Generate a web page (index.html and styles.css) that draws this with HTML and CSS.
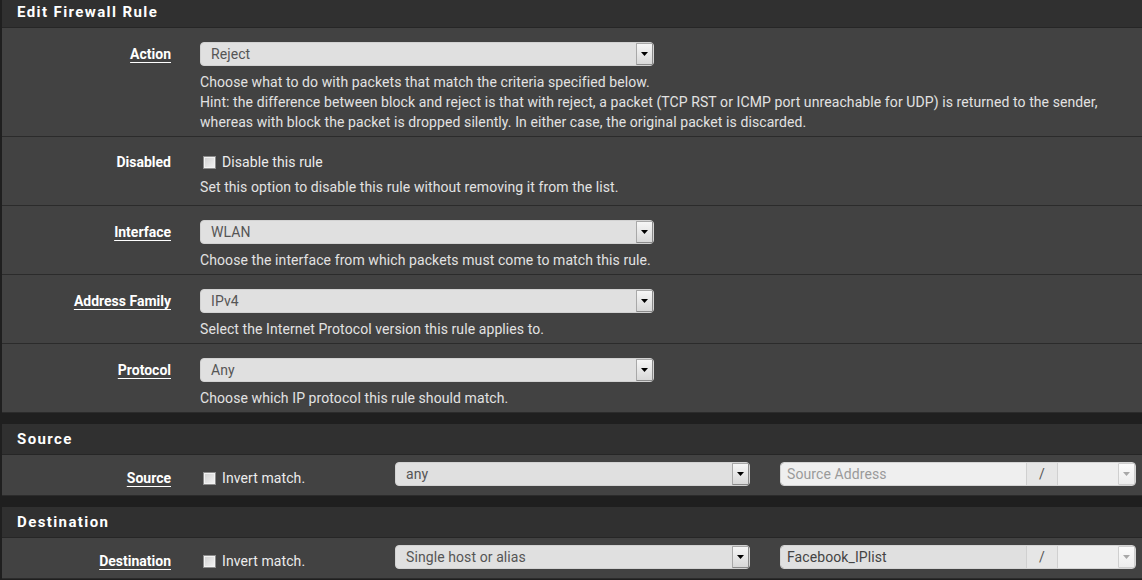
FILE: index.html
```html
<!DOCTYPE html>
<html>
<head>
<meta charset="utf-8">
<title>Edit Firewall Rule</title>
<link rel="stylesheet" href="styles.css">
</head>
<body>
<div class="page">
  <section class="panel">
    <h2 class="panel-heading">Edit Firewall Rule</h2>

    <div class="row">
      <div class="label"><span class="lbl u">Action</span></div>
      <div class="field">
        <div class="select w-main"><span class="val">Reject</span><span class="arrow"><svg width="7" height="4" viewBox="0 0 7 4"><path d="M0 0H7L3.5 4Z" fill="#000"/></svg></span></div>
        <p class="help">Choose what to do with packets that match the criteria specified below.<br>Hint: the difference between block and reject is that with reject, a packet (TCP RST or ICMP port unreachable for UDP) is returned to the sender, whereas with block the packet is dropped silently. In either case, the original packet is discarded.</p>
      </div>
    </div>

    <div class="row check-row">
      <div class="label"><span class="lbl">Disabled</span></div>
      <div class="field">
        <label class="check"><span class="box"></span><span>Disable this rule</span></label>
        <p class="help">Set this option to disable this rule without removing it from the list.</p>
      </div>
    </div>

    <div class="row">
      <div class="label"><span class="lbl u">Interface</span></div>
      <div class="field">
        <div class="select w-main"><span class="val">WLAN</span><span class="arrow"><svg width="7" height="4" viewBox="0 0 7 4"><path d="M0 0H7L3.5 4Z" fill="#000"/></svg></span></div>
        <p class="help">Choose the interface from which packets must come to match this rule.</p>
      </div>
    </div>

    <div class="row">
      <div class="label"><span class="lbl u">Address Family</span></div>
      <div class="field">
        <div class="select w-main"><span class="val">IPv4</span><span class="arrow"><svg width="7" height="4" viewBox="0 0 7 4"><path d="M0 0H7L3.5 4Z" fill="#000"/></svg></span></div>
        <p class="help">Select the Internet Protocol version this rule applies to.</p>
      </div>
    </div>

    <div class="row">
      <div class="label"><span class="lbl u">Protocol</span></div>
      <div class="field">
        <div class="select w-main"><span class="val">Any</span><span class="arrow"><svg width="7" height="4" viewBox="0 0 7 4"><path d="M0 0H7L3.5 4Z" fill="#000"/></svg></span></div>
        <p class="help">Choose which IP protocol this rule should match.</p>
      </div>
    </div>
  </section>

  <section class="panel">
    <h2 class="panel-heading">Source</h2>
    <div class="row addr-row">
      <div class="label"><span class="lbl u">Source</span></div>
      <div class="addr-fields">
        <label class="check invert"><span class="box"></span><span>Invert match.</span></label>
        <div class="select w-type"><span class="val">any</span><span class="arrow"><svg width="7" height="4" viewBox="0 0 7 4"><path d="M0 0H7L3.5 4Z" fill="#000"/></svg></span></div>
        <div class="addr">
          <span class="addr-input placeholder">Source Address</span>
          <span class="slash">/</span>
          <span class="mask"><span class="arrow dis"><svg width="7" height="4" viewBox="0 0 7 4"><path d="M0 0H7L3.5 4Z" fill="#a8a8a8"/></svg></span></span>
        </div>
      </div>
    </div>
  </section>

  <section class="panel">
    <h2 class="panel-heading">Destination</h2>
    <div class="row addr-row">
      <div class="label"><span class="lbl u">Destination</span></div>
      <div class="addr-fields">
        <label class="check invert"><span class="box"></span><span>Invert match.</span></label>
        <div class="select w-type"><span class="val">Single host or alias</span><span class="arrow"><svg width="7" height="4" viewBox="0 0 7 4"><path d="M0 0H7L3.5 4Z" fill="#000"/></svg></span></div>
        <div class="addr">
          <span class="addr-input filled">Facebook_IPlist</span>
          <span class="slash">/</span>
          <span class="mask"><span class="arrow dis"><svg width="7" height="4" viewBox="0 0 7 4"><path d="M0 0H7L3.5 4Z" fill="#a8a8a8"/></svg></span></span>
        </div>
      </div>
    </div>
  </section>
</div>
</body>
</html>
```

FILE: styles.css
```css
html, body {
  margin: 0;
  padding: 0;
}
body {
  background: #1f1f1f;
  font-family: Roboto, "Liberation Sans", Arial, sans-serif;
  font-size: 14px;
  letter-spacing: 0.09px;
  color: #e2e2e2;
  overflow: hidden;
}
.page {
  margin-top: -3px;
}
.panel {
  margin-left: 2px;
  background: #424242;
}
.panel + .panel {
  margin-top: 11px;
}
.panel-heading {
  margin: 0;
  height: 30px;
  line-height: 30px;
  padding-left: 15px;
  background: #303030;
  border-bottom: 1px solid #262626;
  color: #fff;
  font-size: 15px;
  font-weight: 700;
  letter-spacing: 1.4px;
}
.row {
  display: flex;
  padding: 14px 0 4px;
  border-bottom: 1px solid #2b2b2b;
}
.row.check-row {
  padding-bottom: 8px;
}
.label {
  box-sizing: border-box;
  width: 170px;
  padding-right: 1px;
  height: 24px;
  display: flex;
  align-items: center;
  justify-content: flex-end;
  flex-shrink: 0;
}
.check-row .label {
  height: 22px;
}
.lbl {
  color: #fff;
  font-weight: 700;
  font-size: 14px;
  line-height: 16px;
  letter-spacing: 0;
}
.lbl.u {
  text-decoration: underline;
  text-underline-offset: 3px;
  text-decoration-thickness: 1px;
}
.field {
  margin-left: 28px;
  width: 925px;
}
.help {
  margin: 6px 0 0;
  line-height: 20px;
  color: #e2e2e2;
}
.check-row .help {
  margin-top: 4px;
}

.select {
  display: flex;
  align-items: center;
  box-sizing: border-box;
  height: 24px;
  background: #e0e0e0;
  border: 1px solid #d2d2d2;
  border-radius: 4px;
  color: #555;
  padding-left: 10px;
}
.w-main { width: 454px; }
.w-type { width: 355px; }
.val {
  flex: 1;
  white-space: nowrap;
}
.arrow {
  display: flex;
  align-items: center;
  justify-content: center;
  box-sizing: border-box;
  width: 17px;
  height: 22px;
  border: 1px solid #8a8a8a;
  border-top-color: #a8a8a8;
  border-left-color: #a8a8a8;
  background: linear-gradient(#f6f6f6, #d8d8d8);
  border-radius: 1px;
}
.arrow.dis {
  border-color: #cfcfcf;
  background: linear-gradient(#fbfbfb, #ededed);
}

.check {
  display: flex;
  align-items: center;
  height: 22px;
  color: #ececec;
}
.box {
  box-sizing: border-box;
  width: 13px;
  height: 13px;
  margin: 0 6px 0 3px;
  border: 1px solid #8c8c8c;
  background: linear-gradient(135deg, #d0d0d0, #f4f4f4);
  box-shadow: inset 0 0 0 1px #f2f2f2;
}

.row.addr-row {
  padding: 7px 0 9px;
}
.addr-row .label {
  padding-top: 8px;
}
.addr-fields {
  margin-left: 28px;
  display: flex;
  align-items: flex-start;
  height: 24px;
}
.check.invert {
  box-sizing: border-box;
  width: 195px;
  height: 24px;
  padding-top: 8px;
}
.addr {
  margin-left: 30px;
  width: 356px;
  height: 24px;
  box-sizing: border-box;
  display: flex;
  border: 1px solid #d4d4d4;
  border-radius: 4px;
  overflow: hidden;
}
.addr-input {
  width: 239px;
  padding-left: 6px;
  line-height: 22px;
  white-space: nowrap;
}
.addr-input.placeholder {
  background: #efefef;
  color: #9a9a9a;
}
.addr-input.filled {
  background: #e0e0e0;
  color: #444;
}
.slash {
  width: 30px;
  line-height: 22px;
  text-align: center;
  background: #e6e6e6;
  color: #555;
  border-left: 1px solid #d0d0d0;
  border-right: 1px solid #d0d0d0;
}
.mask {
  flex: 1;
  display: flex;
  justify-content: flex-end;
  background: #eeeeee;
}
```
